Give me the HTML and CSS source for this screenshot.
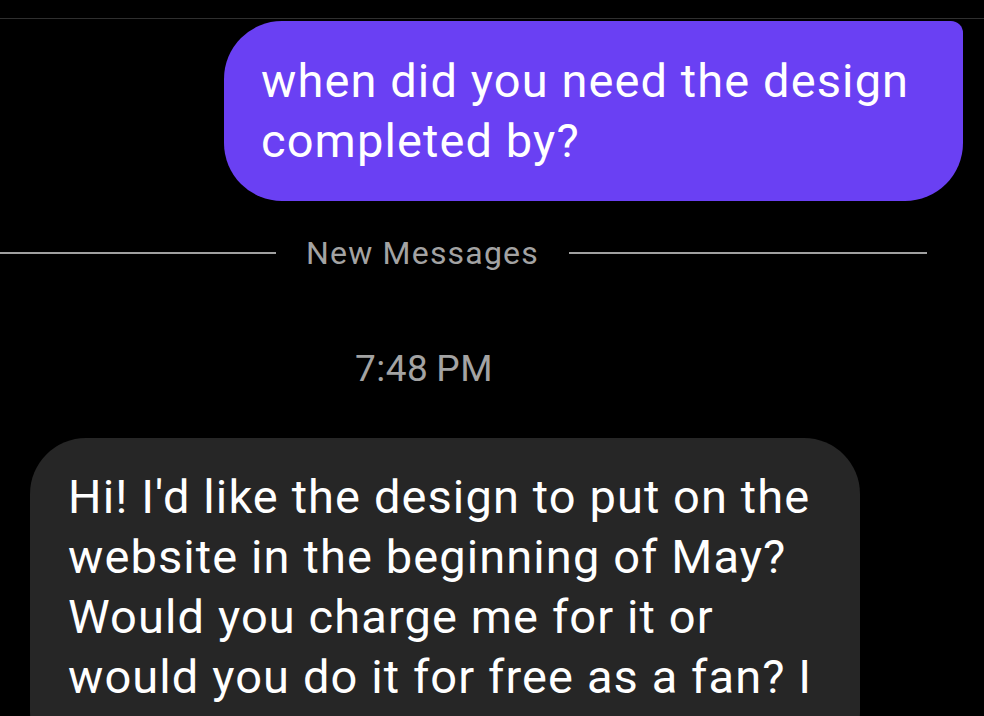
FILE: index.html
```html
<!DOCTYPE html>
<html lang="en">
<head>
  <meta charset="UTF-8" />
  <meta name="viewport" content="width=device-width, initial-scale=1" />
  <title>Messages</title>
  <link rel="stylesheet" href="styles.css">
</head>
<body>

  <div class="top-bar"></div>

  <div class="thread">
    <div class="row outgoing">
      <div class="bubble sent">when did you need the design<br>completed by?</div>
    </div>

    <div class="divider">
      <span class="divider-line left"></span>
      <span class="divider-label">New Messages</span>
      <span class="divider-line right"></span>
    </div>

    <div class="timestamp">7:48&#8201;PM</div>

    <div class="row incoming">
      <div class="bubble received">Hi! I'd like the design to put on the<br>website in the beginning of May?<br>Would you charge me for it or<br>would you do it for free as a fan? I</div>
    </div>
  </div>

</body>
</html>
```

FILE: styles.css
```css
:root {
  --bg-color: #000;
  --sent-bg: #6a40f3;
  --received-bg: #262626;
  --muted-text: #a3a3a3;
  --rule-color: #a0a0a0;
}

body {
  background-color: var(--bg-color);
  color: #fff;
  font-family: Roboto, "Liberation Sans", sans-serif;
  margin: 0;
  height: 716px;
  overflow: hidden;
}

.top-bar {
  height: 18px;
  border-bottom: 1px solid #2f2f2f;
}

.thread {
  display: flex;
  flex-direction: column;
}

.row {
  display: flex;
}

.row.outgoing {
  justify-content: flex-end;
  padding-right: 21px;
  margin-top: 2px;
}

.row.incoming {
  padding-left: 30px;
  margin-top: 47px;
}

.bubble {
  font-size: 47px;
  line-height: 60px;
  letter-spacing: 1.1px;
  white-space: nowrap;
  box-sizing: border-box;
}

.bubble.sent {
  background: var(--sent-bg);
  width: 739px;
  padding: 30px 0 30px 37px;
  border-radius: 58px 12px 58px 58px;
}

.bubble.received {
  background: var(--received-bg);
  width: 830px;
  padding: 29px 0 60px 38px;
  border-radius: 56px;
}

.divider {
  display: flex;
  align-items: center;
  gap: 30px;
  width: 927px;
  height: 40px;
  margin-top: 32px;
}

.divider-line {
  height: 2px;
  background: var(--rule-color);
}

.divider-line.left {
  width: 276px;
}

.divider-line.right {
  flex: 1;
}

.divider-label {
  color: var(--muted-text);
  font-size: 32px;
  letter-spacing: 1.2px;
}

.timestamp {
  width: 848px;
  text-align: center;
  color: var(--muted-text);
  font-size: 37px;
  line-height: 44px;
  letter-spacing: 0.5px;
  margin-top: 74px;
}
```
